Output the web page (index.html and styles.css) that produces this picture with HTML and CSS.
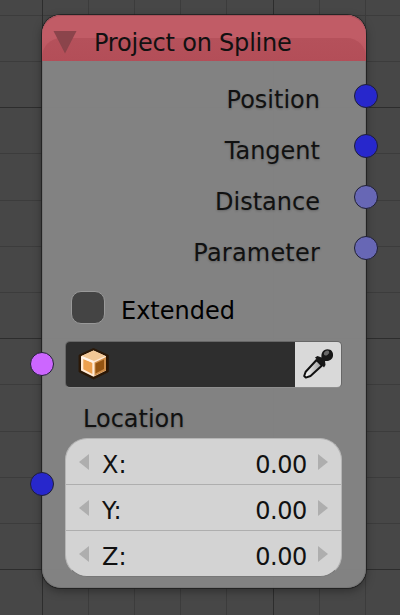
FILE: index.html
```html
<!DOCTYPE html>
<html lang="en">
<head>
<meta charset="utf-8">
<title>Project on Spline</title>
<link rel="stylesheet" href="styles.css">
</head>
<body>
<svg class="grid" width="400" height="615" shape-rendering="crispEdges">
  <path class="minor" d="M88.5 0V615M134.5 0V615M180.5 0V615M226.5 0V615M319.5 0V615M365.5 0V615M0 15.5H400M0 61.5H400M0 153.5H400M0 200.5H400M0 246.5H400M0 292.5H400M0 384.5H400M0 431.5H400M0 477.5H400M0 523.5H400"/>
  <path class="major" d="M42.5 0V615M273.5 0V615M0 107.5H400M0 338.5H400M0 569.5H400"/>
</svg>
<main class="node">
  <header class="header">
    <svg class="collapse" width="24" height="24"><path d="M.5 1H23.5L12 23.5Z"/></svg>
    <h1 class="title">Project on Spline</h1>
  </header>
  <div class="outputs">
    <div class="output"><span>Position</span><i class="socket vector"></i></div>
    <div class="output"><span>Tangent</span><i class="socket vector"></i></div>
    <div class="output"><span>Distance</span><i class="socket number"></i></div>
    <div class="output"><span class="parameter">Parameter</span><i class="socket number"></i></div>
  </div>
  <div class="check"><span class="box"></span><span class="check-label">Extended</span></div>
  <div class="object">
    <i class="socket spline"></i>
    <div class="object-field">
      <svg width="32" height="34" viewBox="0 0 32 34">
        <path d="M15.5 1.5L30.3 8.2V24.8L15.5 32L1 24.8V8.2Z" fill="#2c1704" stroke="#2a1a0b"/>
        <path d="M15.5 3.5L28 9.2V23.5L15.5 29.7L3 23.5V9.2Z" fill="#ffead6"/>
        <path d="M15.5 3.5L27.5 9L15.5 14.2L3.5 9Z" fill="#f2c795"/>
        <path d="M5.3 12L14.3 15.7V27L5.3 22.3Z" fill="#eda04e"/>
        <path d="M16.5 15.4L28 10V23.5L16.5 29Z" fill="#d08f4b"/>
        <path d="M17.5 16.5L26 12.5V22L17.5 26.5Z" fill="#945412"/>
        <path d="M3.5 10L15.5 15" fill="none" stroke="#fff4e9" stroke-width="2"/>
      </svg>
    </div>
    <div class="picker">
      <svg width="34" height="34" viewBox="0 0 34 34">
        <defs><linearGradient id="glass" x1="0" x2="1"><stop offset="0" stop-color="#fff"/><stop offset="1" stop-color="#999"/></linearGradient></defs>
        <path d="M15.5 13L21 18.5L9.5 29L4.8 30.6L3.2 29L4.7 24.7Z" fill="url(#glass)" stroke="#111" stroke-width="2" stroke-linejoin="round"/>
        <path d="M14 10.5L16.5 9L20.5 10.5C20 6 22 2.2 26.5 2.2C30.5 2.2 32.5 5 32 9C31.3 12.6 28 14.6 24 14L24.5 18L23 20.5Z" fill="#171717"/>
        <ellipse cx="25.5" cy="6" rx="3" ry="2" fill="#686868" transform="rotate(-35 25.5 6)"/>
      </svg>
    </div>
  </div>
  <div class="location-label">Location</div>
  <div class="location">
    <i class="socket vector"></i>
    <div class="row"><svg width="10" height="16"><path d="M10 0V16L0 8Z"/></svg><span class="axis">X:</span><span class="value">0.00</span><svg width="10" height="16"><path d="M0 0V16L10 8Z"/></svg></div>
    <div class="row"><svg width="10" height="16"><path d="M10 0V16L0 8Z"/></svg><span class="axis">Y:</span><span class="value">0.00</span><svg width="10" height="16"><path d="M0 0V16L10 8Z"/></svg></div>
    <div class="row"><svg width="10" height="16"><path d="M10 0V16L0 8Z"/></svg><span class="axis">Z:</span><span class="value">0.00</span><svg width="10" height="16"><path d="M0 0V16L10 8Z"/></svg></div>
  </div>
</main>
</body>
</html>
```
FILE: styles.css
```css
* { box-sizing: border-box; }
body {
  margin: 0;
  width: 400px;
  height: 615px;
  overflow: hidden;
  background: #474747;
  color: #111;
  font: 24px/28px "DejaVu Sans", sans-serif;
  padding: 15px 0 0 42px;
}
svg { display: block; flex: none; }
.grid { position: absolute; left: 0; top: 0; z-index: -1; }
.grid path { fill: none; stroke-width: 1; }
.minor { stroke: #3c3c3c; }
.major { stroke: #2d2d2d; }
.node {
  position: relative;
  width: 324px;
  height: 573px;
  border-radius: 19px;
  background: rgba(132, 132, 132, .97);
  box-shadow: inset 0 0 0 1px rgba(110, 110, 110, .6), 0 0 0 1px rgba(30, 30, 30, .8), 0 3px 10px rgba(0, 0, 0, .35);
}
.header {
  position: relative;
  display: flex;
  align-items: center;
  height: 46px;
  padding: 8px 0 0 11px;
  border-radius: 19px 19px 0 0;
  background: linear-gradient(#c15c66 50%, #b9545e);
  overflow: hidden;
  box-shadow: inset 0 1px #a8505a;
}
.header::before {
  content: "";
  position: absolute;
  left: 0;
  right: 0;
  bottom: 0;
  height: 23px;
  border-radius: 19px 19px 0 0;
  background: linear-gradient(#b5515b, #b34e58);
}
.collapse { position: relative; fill: #8b444b; }
.title {
  position: relative;
  margin: 2px 0 0 17px;
  font-size: 24px;
  font-weight: 400;
  letter-spacing: -.2px;
  white-space: nowrap;
}
.outputs { padding-top: 10px; }
.output {
  position: relative;
  height: 51px;
  padding: 15px 46px 0 0;
  text-align: right;
  text-shadow: 0 1px 2px rgba(50, 50, 50, .35);
}
.parameter { letter-spacing: .2px; }
.socket {
  position: absolute;
  width: 24px;
  height: 24px;
  border: 1px solid #202033;
  border-radius: 50%;
}
.output .socket { right: -12px; top: 13px; }
.output:nth-child(n+2) .socket { top: 12px; }
.vector { background: #2727cc; }
.number { background: #6767b5; }
.spline { background: #cc66ff; }
.check {
  display: flex;
  height: 34px;
  margin: 15px 0 0 29px;
  color: #000;
}
.box {
  width: 34px;
  height: 33px;
  margin-top: 1px;
  border: 1px solid #999;
  border-radius: 10px;
  background: #444;
}
.check-label { margin: 7px 0 0 16px; }
.object {
  position: relative;
  display: flex;
  width: 277px;
  height: 47px;
  margin: 17px 0 0 23px;
  border: 1px solid #676767;
  border-bottom-color: #8e8e8e;
  border-radius: 5px;
}
.object .socket { left: -36px; top: 10px; }
.object-field {
  flex: 1;
  padding: 5px 12px;
  border-radius: 4px 0 0 4px;
  background: #2e2e2e;
}
.picker {
  width: 46px;
  padding: 5px 6px;
  border-radius: 0 4px 4px 0;
  background: #d9d9d9;
}
.location-label {
  height: 50px;
  padding: 17px 0 0 41px;
  text-shadow: 0 1px 2px rgba(50, 50, 50, .35);
}
.location {
  position: relative;
  width: 277px;
  height: 139px;
  margin-left: 23px;
  border: 1px solid #b5b5b5;
  border-bottom-color: #777;
  border-radius: 22px;
  background: #d3d3d3;
}
.location .socket { left: -36px; top: 33px; }
.row {
  display: flex;
  height: 46px;
  padding: 0 13px;
}
.row:nth-of-type(1) { height: 45px; }
.row + .row { border-top: 1px solid #aeaeae; }
.row svg { margin-top: 15px; fill: #aeaeae; }
.axis { margin: 12px 0 0 13px; }
.value { margin: 12px 11px 0 auto; letter-spacing: -.4px; }
```
